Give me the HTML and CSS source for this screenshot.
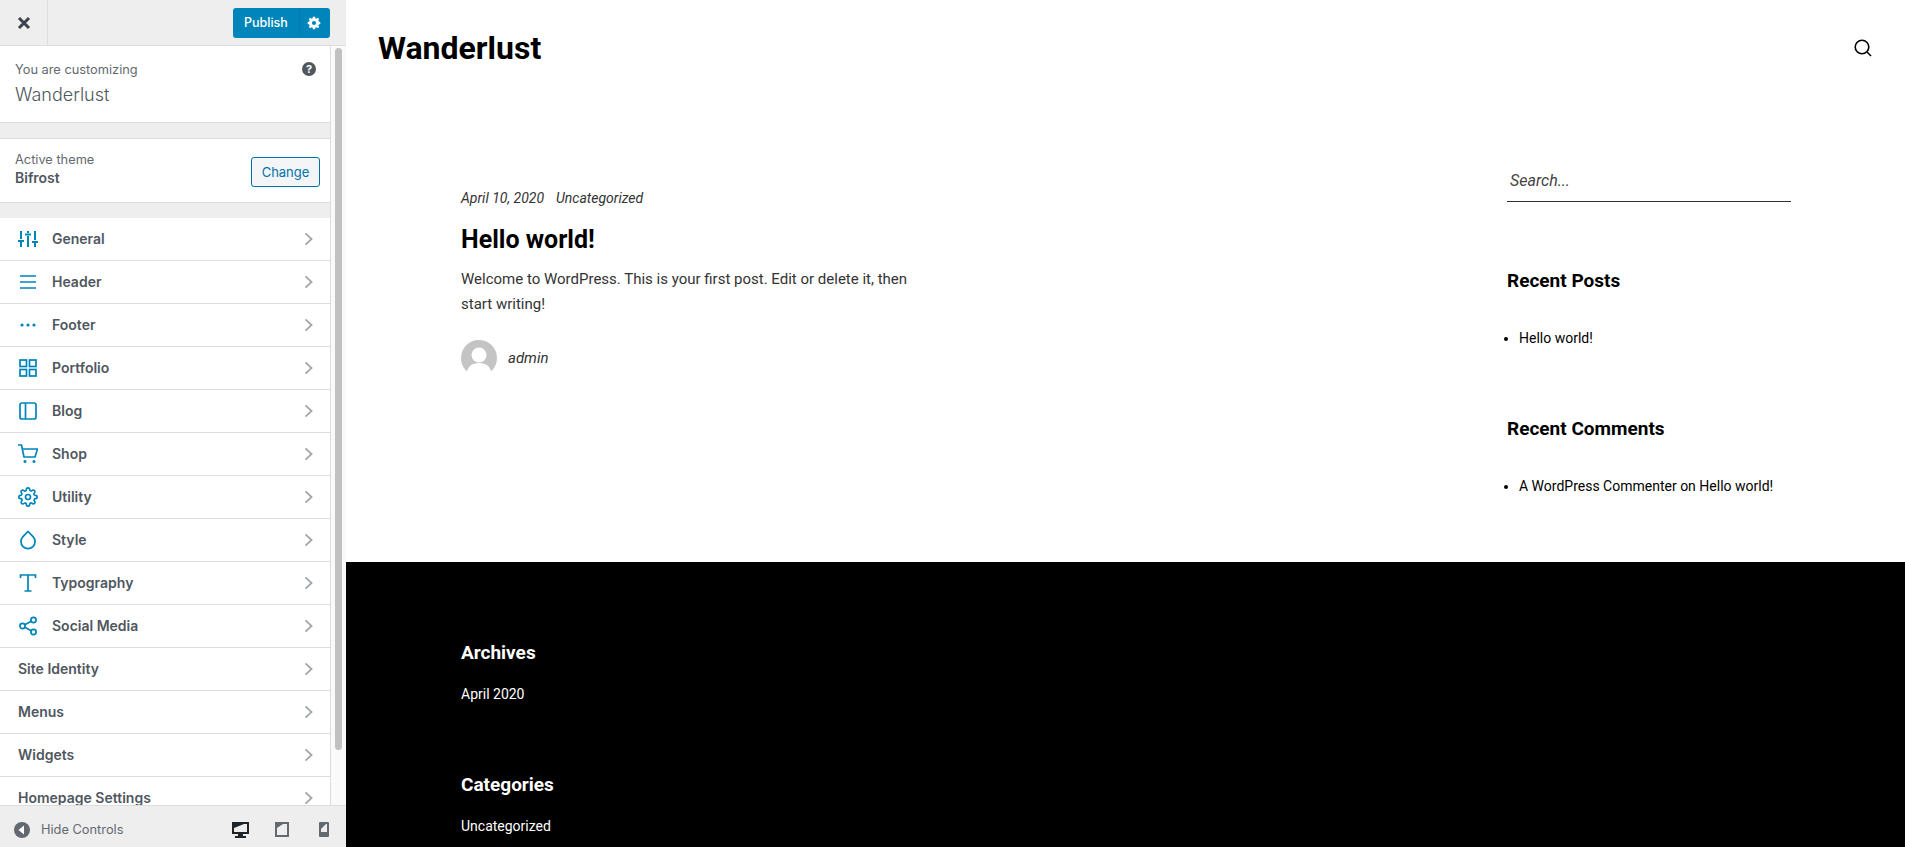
FILE: index.html

```html
<!DOCTYPE html>
<html lang="en">
<head>
  <meta charset="UTF-8">
  <title>Customize: Wanderlust</title>
  <link rel="stylesheet" href="styles.css">
</head>
<body>
  <div class="customizer">
    <aside class="controls">
      <div class="topbar">
        <button class="close-btn" aria-label="Close">
          <svg width="14" height="14" viewBox="0 0 14 14"><path d="M2 2l10 10M12 2L2 12" stroke="#3c434a" stroke-width="3" fill="none"/></svg>
        </button>
        <div class="publish">
          <span class="publish-label">Publish</span>
          <span class="publish-gear">
            <svg width="14" height="14" viewBox="0 0 20 20"><path fill="#fff" fill-rule="evenodd" d="M18 11.500v-3l-2.300-.5a6 6 0 0 0-.6-1.400l1.300-2-2.100-2.100-2 1.300c-.4-.3-.9-.5-1.400-.6L10.500 1h-3L7 3.200c-.5.1-1 .3-1.400.6l-2-1.300-2.100 2.100 1.300 2c-.3.4-.5.9-.6 1.400L0 8.500v3l2.200.5c.1.5.3 1 .6 1.400l-1.300 2 2.100 2.100 2-1.300c.4.3.9.5 1.400.6l.5 2.200h3l.5-2.200c.5-.1 1-.3 1.400-.6l2 1.300 2.100-2.100-1.300-2c.3-.4.5-.9.6-1.400zM9 13a3 3 0 1 1 0-6 3 3 0 0 1 0 6z" transform="translate(1 0)"/></svg>
          </span>
        </div>
      </div>

      <div class="controls-body">
        <div class="panel-scroll">
          <div class="info">
            <div class="info-text">
              <span class="info-small">You are customizing</span>
              <span class="info-site">Wanderlust</span>
            </div>
            <svg class="help" width="14" height="14" viewBox="0 0 14 14"><circle cx="7" cy="7" r="7" fill="#50575e"/><text x="7" y="11" text-anchor="middle" class="help-mark">?</text></svg>
          </div>
          <div class="theme">
            <div class="theme-text">
              <span class="info-small">Active theme</span>
              <strong class="theme-name">Bifrost</strong>
            </div>
            <button class="change-btn">Change</button>
          </div>

          <ul class="menu">
            <li class="menu-item">
              <svg class="menu-icon menu-icon-bold" viewBox="0 0 20 20"><path d="M3 2v8M3 13v5M10 2v2M10 7v11M17 2v9M17 14v4M0 12h6M7 5.500h6M14 13h6"/></svg>
              <span class="menu-label">General</span>
              <svg class="chevron" viewBox="0 0 10 16"><path d="M1.500 1.500L8.500 8l-7 6.500"/></svg>
            </li>
            <li class="menu-item">
              <svg class="menu-icon" viewBox="0 0 20 20"><path d="M2 4h16M2 10h16M2 16h16"/></svg>
              <span class="menu-label">Header</span>
              <svg class="chevron" viewBox="0 0 10 16"><path d="M1.500 1.500L8.500 8l-7 6.500"/></svg>
            </li>
            <li class="menu-item">
              <svg class="menu-icon" viewBox="0 0 20 20"><circle class="dot" cx="4" cy="10" r="1.600"/><circle class="dot" cx="10" cy="10" r="1.600"/><circle class="dot" cx="16" cy="10" r="1.600"/></svg>
              <span class="menu-label">Footer</span>
              <svg class="chevron" viewBox="0 0 10 16"><path d="M1.500 1.500L8.500 8l-7 6.500"/></svg>
            </li>
            <li class="menu-item">
              <svg class="menu-icon" viewBox="0 0 20 20"><rect x="2" y="2" width="6.500" height="6.500"/><rect x="11.500" y="2" width="6.500" height="6.500"/><rect x="2" y="11.500" width="6.500" height="6.500"/><rect x="11.500" y="11.500" width="6.500" height="6.500"/></svg>
              <span class="menu-label">Portfolio</span>
              <svg class="chevron" viewBox="0 0 10 16"><path d="M1.500 1.500L8.500 8l-7 6.500"/></svg>
            </li>
            <li class="menu-item">
              <svg class="menu-icon" viewBox="0 0 20 20"><rect x="2" y="2" width="16" height="16" rx="2"/><path d="M7.500 2v16"/></svg>
              <span class="menu-label">Blog</span>
              <svg class="chevron" viewBox="0 0 10 16"><path d="M1.500 1.500L8.500 8l-7 6.500"/></svg>
            </li>
            <li class="menu-item">
              <svg class="menu-icon" viewBox="0 0 20 20"><path d="M0 1h3.500l2.500 12h11L19.500 5H4.500"/><circle class="dot" cx="7" cy="17.500" r="1.500"/><circle class="dot" cx="16" cy="17.500" r="1.500"/></svg>
              <span class="menu-label">Shop</span>
              <svg class="chevron" viewBox="0 0 10 16"><path d="M1.500 1.500L8.500 8l-7 6.500"/></svg>
            </li>
            <li class="menu-item">
              <svg class="menu-icon menu-icon-bold" viewBox="0 0 24 24"><circle cx="12" cy="12" r="3"/><path d="M19.400 15a1.650 1.650 0 0 0 .33 1.820l.06.06a2 2 0 1 1-2.830 2.830l-.06-.06a1.650 1.650 0 0 0-2.820 1.170V21a2 2 0 0 1-4 0v-.09A1.650 1.650 0 0 0 7.260 19.700l-.06.06a2 2 0 1 1-2.830-2.830l.06-.06A1.650 1.650 0 0 0 3.260 14H3a2 2 0 0 1 0-4h.09A1.650 1.650 0 0 0 4.300 7.260l-.06-.06a2 2 0 1 1 2.830-2.830l.06.06A1.650 1.650 0 0 0 10 3.260V3a2 2 0 0 1 4 0v.09a1.650 1.650 0 0 0 2.740 1.210l.06-.06a2 2 0 1 1 2.830 2.830l-.06.06A1.650 1.650 0 0 0 20.740 10H21a2 2 0 0 1 0 4h-.09a1.650 1.650 0 0 0-1.510 1z"/></svg>
              <span class="menu-label">Utility</span>
              <svg class="chevron" viewBox="0 0 10 16"><path d="M1.500 1.500L8.500 8l-7 6.500"/></svg>
            </li>
            <li class="menu-item">
              <svg class="menu-icon" viewBox="0 0 20 20"><path d="M10 1.500l5 5.200a7 7 0 1 1-10 0z"/></svg>
              <span class="menu-label">Style</span>
              <svg class="chevron" viewBox="0 0 10 16"><path d="M1.500 1.500L8.500 8l-7 6.500"/></svg>
            </li>
            <li class="menu-item">
              <svg class="menu-icon" viewBox="0 0 20 20"><path d="M2.500 5V2h15v3M10 2v16M6.500 18h7"/></svg>
              <span class="menu-label">Typography</span>
              <svg class="chevron" viewBox="0 0 10 16"><path d="M1.500 1.500L8.500 8l-7 6.500"/></svg>
            </li>
            <li class="menu-item">
              <svg class="menu-icon" viewBox="0 0 20 20"><circle cx="15.500" cy="4" r="2.600"/><circle cx="4.500" cy="10" r="2.600"/><circle cx="15.500" cy="16" r="2.600"/><path d="M6.800 8.700l6.400-3.400M6.800 11.300l6.400 3.400"/></svg>
              <span class="menu-label">Social Media</span>
              <svg class="chevron" viewBox="0 0 10 16"><path d="M1.500 1.500L8.500 8l-7 6.500"/></svg>
            </li>
            <li class="menu-item">
              <span class="menu-label">Site Identity</span>
              <svg class="chevron" viewBox="0 0 10 16"><path d="M1.500 1.500L8.500 8l-7 6.500"/></svg>
            </li>
            <li class="menu-item">
              <span class="menu-label">Menus</span>
              <svg class="chevron" viewBox="0 0 10 16"><path d="M1.500 1.500L8.500 8l-7 6.500"/></svg>
            </li>
            <li class="menu-item">
              <span class="menu-label">Widgets</span>
              <svg class="chevron" viewBox="0 0 10 16"><path d="M1.500 1.500L8.500 8l-7 6.500"/></svg>
            </li>
            <li class="menu-item">
              <span class="menu-label">Homepage Settings</span>
              <svg class="chevron" viewBox="0 0 10 16"><path d="M1.500 1.500L8.500 8l-7 6.500"/></svg>
            </li>
          </ul>
        </div>
        <div class="scroll-track"><div class="scroll-thumb"></div></div>
      </div>

      <div class="bottombar">
        <div class="hide-controls">
          <svg width="16" height="16" viewBox="0 0 16 16"><circle cx="8" cy="8" r="8" fill="#646970"/><path d="M10 3.500v9L4.500 8z" fill="#fff"/></svg>
          <span>Hide Controls</span>
        </div>
        <div class="devices">
          <svg width="17" height="16" viewBox="0 0 17 16"><path fill="#1d2327" fill-rule="evenodd" d="M0 0h17v12h-6v2h3v2H3v-2h3v-2H0zM2 2v8h13V2z"/><path fill="#1d2327" d="M2 2h10L2 6z"/></svg>
          <svg width="14" height="15" viewBox="0 0 14 15"><rect x="1" y="1" width="12" height="13" fill="none" stroke="#646970" stroke-width="2"/><path fill="#646970" d="M2 2h6L2 6z"/></svg>
          <svg class="device-phone" width="10" height="15" viewBox="0 0 10 15"><path fill="#646970" fill-rule="evenodd" d="M1 0h8a1 1 0 0 1 1 1v13a1 1 0 0 1-1 1H1a1 1 0 0 1-1-1V1a1 1 0 0 1 1-1zM2 2v8h6V2z"/><path fill="#646970" d="M2 2h5L2 7z"/></svg>
        </div>
      </div>
    </aside>

    <main class="preview">
      <header class="site-header">
        <span class="site-title">Wanderlust</span>
        <svg class="search-icon" width="18" height="18" viewBox="0 0 18 18"><circle cx="8" cy="8" r="6.800" fill="none" stroke="#000" stroke-width="1.600"/><path d="M13 13l4 4" stroke="#000" stroke-width="1.600"/></svg>
      </header>

      <div class="site-content">
        <article class="post">
          <div class="post-meta"><span>April 10, 2020</span><span>Uncategorized</span></div>
          <h1 class="post-title">Hello world!</h1>
          <p class="post-text">Welcome to WordPress. This is your first post. Edit or delete it, then start writing!</p>
          <div class="post-author">
            <svg class="avatar" viewBox="0 0 36 36"><circle cx="18" cy="18" r="18" fill="#c4c4c4"/><circle cx="18" cy="15" r="7.500" fill="#fff"/><path d="M5 36c1-10 6-13 13-13s12 3 13 13z" fill="#fff"/></svg>
            <span>admin</span>
          </div>
        </article>

        <aside class="site-sidebar">
          <div class="search-field">Search...</div>
          <section class="widget">
            <h2 class="widget-title">Recent Posts</h2>
            <ul class="widget-list"><li>Hello world!</li></ul>
          </section>
          <section class="widget">
            <h2 class="widget-title">Recent Comments</h2>
            <ul class="widget-list"><li>A WordPress Commenter on Hello world!</li></ul>
          </section>
        </aside>
      </div>

      <footer class="site-footer">
        <section class="footer-widget">
          <h2 class="widget-title">Archives</h2>
          <p>April 2020</p>
        </section>
        <section class="footer-widget">
          <h2 class="widget-title">Categories</h2>
          <p>Uncategorized</p>
        </section>
      </footer>
    </main>
  </div>
</body>
</html>
```

FILE: styles.css

```css
* { box-sizing: border-box; }
html, body { margin: 0; height: 100%; overflow: hidden; }
body { background: #fff; font-family: Roboto, "Noto Sans", sans-serif; }
ul { margin: 0; padding: 0; }
button { font-family: inherit; }

.customizer { display: flex; height: 847px; }

/* left panel */
.controls {
  width: 346px;
  flex: none;
  display: flex;
  flex-direction: column;
  background: #eee;
  color: #50575e;
  font-family: Inter, "Noto Sans", sans-serif;
}
.topbar {
  height: 46px;
  flex: none;
  display: flex;
  align-items: center;
  justify-content: space-between;
  padding-right: 16px;
  border-bottom: 1px solid #ddd;
}
.close-btn {
  width: 48px;
  height: 45px;
  display: flex;
  align-items: center;
  justify-content: center;
  padding: 0;
  background: none;
  border: none;
  border-right: 1px solid #ddd;
}
.publish {
  display: flex;
  height: 30px;
  border-radius: 3px;
  background: #0085ba;
  color: #fff;
  font-size: 12.500px;
  font-weight: 500;
}
.publish-label { width: 66px; padding-left: 11px; line-height: 30px; }
.publish-gear {
  width: 31px;
  display: flex;
  align-items: center;
  justify-content: center;
  padding-right: 2px;
  border-left: 1px solid #007dae;
}

.controls-body { flex: 1; display: flex; min-height: 0; background: #fff; }
.panel-scroll { width: 331px; flex: none; overflow: hidden; background: #eee; border-right: 1px solid #ddd; }
.scroll-track { flex: 1; padding: 2px 4px; background: #fafafa; }
.scroll-thumb { height: 702px; border-radius: 4px; background: #c1c1c1; }

.info {
  height: 77px;
  display: flex;
  justify-content: space-between;
  padding: 15px 14px 0 15px;
  background: #fff;
  border-bottom: 1px solid #ddd;
}
.info-text, .theme-text { display: flex; flex-direction: column; }
.info-small { font-size: 12.800px; line-height: 18px; color: #646970; }
.info-site { font-size: 18px; font-weight: 300; line-height: 28px; color: #50575e; margin-top: 2px; }
.help { margin-top: 1px; }
.help-mark { font-size: 11px; font-weight: 700; fill: #fff; font-family: Inter, sans-serif; }

.theme {
  height: 65px;
  margin-top: 15px;
  display: flex;
  align-items: center;
  justify-content: space-between;
  padding: 0 10px 0 15px;
  background: #fff;
  border-top: 1px solid #ddd;
  border-bottom: 1px solid #ddd;
}
.theme-text { margin-top: -3px; }
.theme-name { font-size: 14px; font-weight: 600; line-height: 18px; color: #50575e; }
.change-btn {
  width: 69px;
  height: 30px;
  margin-top: 3px;
  padding: 0;
  font-size: 13px;
  color: #0073aa;
  background: #f3f5f6;
  border: 1px solid #0073aa;
  border-radius: 3px;
  font-family: inherit;
}

.menu { list-style: none; margin-top: 15px; background: #fff; }
.menu-item {
  height: 43px;
  display: flex;
  align-items: center;
  padding: 0 17px 1px 18px;
  border-bottom: 1px solid #ddd;
  font-size: 14px;
  font-weight: 600;
  color: #50575e;
}
.menu-icon {
  width: 20px;
  height: 20px;
  margin-right: 14px;
  fill: none;
  stroke: #0085ba;
  stroke-width: 1.700;
}
.menu-icon-bold { stroke-width: 2; }
.menu-icon .dot { fill: #0085ba; stroke: none; }
.menu-label { flex: 1; }
.chevron { width: 9px; height: 14px; fill: none; stroke: #a0a5aa; stroke-width: 2; }

.bottombar {
  height: 42px;
  flex: none;
  display: flex;
  align-items: center;
  justify-content: space-between;
  padding: 6px 17px 0 14px;
  background: #eee;
  border-top: 1px solid #ddd;
}
.hide-controls { display: flex; align-items: center; gap: 11px; font-size: 12.800px; color: #646970; }
.devices { display: flex; align-items: center; gap: 26px; }
.device-phone { margin-left: 4px; }

/* preview */
.preview { flex: 1; min-width: 0; overflow: hidden; background: #fff; color: #222; }
.site-header {
  height: 96px;
  display: flex;
  align-items: center;
  justify-content: space-between;
  padding: 0 33px 0 32px;
}
.site-title { font-size: 32px; font-weight: 700; color: #000; }
.site-content {
  height: 466px;
  display: flex;
  justify-content: space-between;
  padding: 92px 114px 0 115px;
}
.post { width: 460px; }
.post-meta { display: flex; gap: 12px; font-size: 14px; font-style: italic; line-height: 20px; color: #333; }
.post-title { margin: 16px 0 0; font-size: 25px; font-weight: 700; line-height: 32px; color: #000; }
.post-text { margin: 11px 0 0; font-size: 15px; line-height: 25px; color: #333; }
.post-author { display: flex; align-items: center; gap: 11px; margin-top: 23px; font-size: 15px; font-style: italic; color: #333; }
.avatar { width: 36px; height: 36px; }

.site-sidebar { width: 284px; margin-top: -25px; }
.search-field {
  height: 39px;
  padding: 0 3px;
  font-size: 16px;
  font-style: italic;
  line-height: 36px;
  color: #444;
  border-bottom: 1px solid #333;
}
.widget { margin-top: 68px; }
.widget + .widget { margin-top: 69px; }
.widget-title { margin: 0; font-size: 19px; font-weight: 700; line-height: 22px; color: #000; }
.widget-list { margin-top: 35px; padding-left: 12px; font-size: 14px; line-height: 22px; color: #000; }

.site-footer { height: 300px; background: #000; color: #fff; padding: 80px 115px 0; }
.site-footer .widget-title { color: #fff; }
.footer-widget { margin-bottom: 70px; }
.footer-widget p { margin: 20px 0 0; font-size: 14px; line-height: 20px; }
```
